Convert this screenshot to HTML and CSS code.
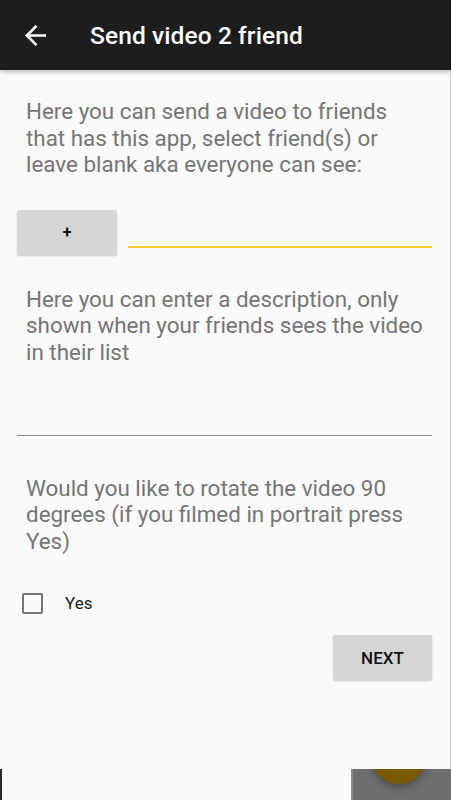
FILE: index.html
```html
<!DOCTYPE html>
<html>
<head>
<meta charset="utf-8">
<link rel="stylesheet" href="styles.css">
</head>
<body>
<div class="app">
  <header class="toolbar">
    <svg class="back" viewBox="4 4 16 16" width="21" height="21"><path d="M20 11H7.83l5.59-5.59L12 4l-8 8 8 8 1.41-1.41L7.83 13H20v-2z" fill="#fff"/></svg>
    <h1 class="title">Send video 2 friend</h1>
  </header>
  <main class="content">
    <p class="label first">Here you can send a video to friends that has this app, select friend(s) or leave blank aka everyone can see:</p>
    <div class="friend-row">
      <button class="btn plus">+</button>
      <div class="friend-input"></div>
    </div>
    <div class="desc">
      <p class="label">Here you can enter a description, only shown when your friends sees the video in their list</p>
    </div>
    <p class="label rotate">Would you like to rotate the video 90 degrees (if you filmed in portrait press Yes)</p>
    <label class="check-row">
      <span class="box"></span>
      <span class="check-text">Yes</span>
    </label>
    <div class="actions">
      <button class="btn next">NEXT</button>
    </div>
  </main>
  <div class="edge-right"></div>
  <div class="edge-left"></div>
  <div class="peek"><div class="fab"></div></div>
</div>
</body>
</html>
```
FILE: styles.css
```css
* { box-sizing: border-box; }
html, body { margin: 0; padding: 0; }
body {
  font-family: Roboto, "Noto Sans", sans-serif;
  background: #fafafa;
}
.app {
  position: relative;
  width: 451px;
  height: 800px;
  overflow: hidden;
  background: #fafafa;
}
.toolbar {
  height: 70px;
  background: #1d1d1d;
  display: flex;
  align-items: center;
  padding-left: 25px;
  box-shadow: 0 2px 5px rgba(0,0,0,0.25);
  position: relative;
  z-index: 1;
}
.back { display: block; }
.title {
  margin: 0 0 0 44px;
  color: #fff;
  font-size: 24.5px;
  font-weight: 500;
  letter-spacing: 0.1px;
}
.content {
  padding: 0 19px 0 17px;
}
.label {
  margin: 0;
  padding: 0 2px 0 9px;
  color: #757575;
  font-size: 22.4px;
  line-height: 26.5px;
}
.first { padding-top: 28px; }
.friend-row {
  display: flex;
  align-items: flex-start;
  margin-top: 32px;
  gap: 11px;
}
.btn {
  border: none;
  background: #d6d6d6;
  border-radius: 2px;
  box-shadow: 0 1px 2px rgba(0,0,0,0.2);
  font-family: Roboto, sans-serif;
  color: #111;
  padding: 0;
}
.plus {
  width: 100px;
  height: 45px;
  font-size: 16px;
  font-weight: 700;
}
.friend-input {
  flex: 1;
  height: 38px;
  border-bottom: 2px solid #fbc934;
}
.desc {
  margin-top: 31px;
  height: 150px;
  border-bottom: 1px solid #8a8a8a;
}
.rotate { margin-top: 39px; }
.check-row {
  display: flex;
  align-items: center;
  margin-top: 37px;
  padding-left: 5px;
  height: 24px;
}
.box {
  width: 21px;
  height: 21px;
  border: 2px solid #757575;
  border-radius: 2px;
}
.check-text {
  margin-left: 22px;
  font-size: 17px;
  color: #1a1a1a;
}
.actions {
  display: flex;
  justify-content: flex-end;
  margin-top: 20px;
}
.next {
  width: 99px;
  height: 45px;
  font-size: 17px;
  font-weight: 500;
}
.edge-right {
  position: absolute;
  top: 0;
  right: 0;
  width: 1px;
  height: 800px;
  background: linear-gradient(#111 0 70px, #c8c8c8 70px);
  z-index: 2;
}
.edge-left {
  position: absolute;
  left: 0;
  top: 769px;
  width: 2px;
  height: 31px;
  background: #2a2a2a;
}
.peek {
  position: absolute;
  left: 351px;
  top: 769px;
  width: 100px;
  height: 31px;
  background: #6e6e6e;
  border-left: 2px solid #8a8a8a;
  overflow: hidden;
  z-index: 3;
}
.fab {
  position: absolute;
  left: 19px;
  top: -39px;
  width: 54px;
  height: 54px;
  border-radius: 50%;
  background: #7a5a00;
  box-shadow: 0 3px 8px rgba(0,0,0,0.35);
}
```
